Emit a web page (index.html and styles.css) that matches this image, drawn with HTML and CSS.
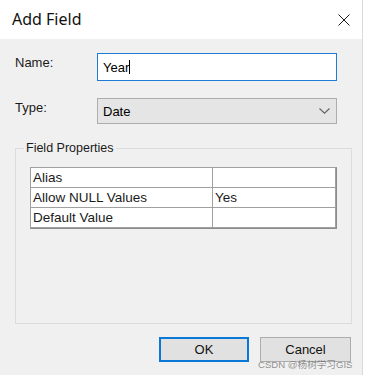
FILE: index.html
```html
<!DOCTYPE html>
<html>
<head>
<meta charset="utf-8">
<link rel="stylesheet" href="styles.css">
</head>
<body>
<div class="dialog">
  <div class="titlebar">
    <span class="title">Add Field</span>
    <svg class="close" width="12" height="12" viewBox="0 0 12 12"><path d="M0.5 0.5 L11.5 11.5 M11.5 0.5 L0.5 11.5" stroke="#1a1a1a" stroke-width="1" fill="none"/></svg>
  </div>
  <div class="content">
    <div class="row row-name">
      <label class="lbl">Name:</label>
      <div class="input"><span>Year</span><span class="caret"></span></div>
    </div>
    <div class="row row-type">
      <label class="lbl">Type:</label>
      <div class="combo"><span>Date</span>
        <svg class="chev" width="11" height="6" viewBox="0 0 11 6"><path d="M0.5 0.5 L5.5 5.2 L10.5 0.5" stroke="#606060" stroke-width="1.1" fill="none"/></svg>
      </div>
    </div>
    <fieldset class="group">
      <legend>Field Properties</legend>
      <table class="props">
        <tr><td class="c1">Alias</td><td class="c2"></td></tr>
        <tr><td class="c1">Allow NULL Values</td><td class="c2">Yes</td></tr>
        <tr><td class="c1">Default Value</td><td class="c2"></td></tr>
      </table>
    </fieldset>
    <div class="buttons">
      <button class="btn btn-ok">OK</button>
      <button class="btn">Cancel</button>
    </div>
  </div>
  <div class="watermark">CSDN @杨树学习GIS</div>
</div>
</body>
</html>
```
FILE: styles.css
```css
html, body {
  margin: 0;
  padding: 0;
  background: #ffffff;
}
.dialog {
  position: relative;
  width: 363px;
  height: 375px;
  background: #f0f0f0;
  display: flex;
  flex-direction: column;
  font-family: "Liberation Sans", Arial, sans-serif;
  font-size: 13px;
  color: #000;
  border-right: 1px solid #dadada;
  box-sizing: border-box;
}
.titlebar {
  height: 39px;
  flex: none;
  background: #ffffff;
  display: flex;
  align-items: center;
  justify-content: space-between;
  padding: 0 12px 1px 12px;
  box-sizing: border-box;
}
.title {
  font-family: "Noto Sans", sans-serif;
  font-size: 16px;
  color: #111;
}
.close {
  display: block;
  margin-top: 1px;
}
.content {
  flex: 1;
  display: flex;
  flex-direction: column;
  padding: 14px 10px 13px 15px;
}
.row {
  display: flex;
  padding-right: 15px;
}
.lbl {
  width: 82px;
  flex: none;
  padding-top: 2px;
  line-height: 15px;
  font-size: 13px;
  color: #1a1a1a;
}
.input {
  flex: 1;
  height: 28px;
  box-sizing: border-box;
  border: 1px solid #1e7bd6;
  background: #fff;
  display: flex;
  align-items: center;
  padding-left: 5px;
  font-size: 13px;
}
.caret {
  display: inline-block;
  width: 1px;
  height: 14px;
  background: #000;
}
.row-type {
  margin-top: 17px;
}
.combo {
  flex: 1;
  height: 26px;
  box-sizing: border-box;
  border: 1px solid #adadad;
  background: #e5e5e5;
  display: flex;
  align-items: center;
  justify-content: space-between;
  padding: 0 6px 0 5px;
  font-size: 13px;
}
.chev {
  display: block;
}
.group {
  flex: 1;
  margin: 17px 0 0 0;
  border: 1px solid #dcdcdc;
  padding: 11px 14px 0 14px;
  min-width: 0;
}
.group legend {
  font-size: 12.5px;
  line-height: 15px;
  padding: 0 2px;
  margin-left: -6px;
  color: #1a1a1a;
}
.props {
  width: 307px;
  border-collapse: separate;
  border-spacing: 0;
  border-top: 1px solid #a0a0a0;
  border-left: 1px solid #a0a0a0;
  border-right: 1px solid #8c8c8c;
  border-bottom: 1px solid #8c8c8c;
  background: #fff;
  font-size: 13.5px;
}
.props td {
  height: 19px;
  padding: 0 0 0 2px;
  border-right: 1px solid #a0a0a0;
  border-bottom: 1px solid #a0a0a0;
  line-height: 18px;
  white-space: nowrap;
  color: #1a1a1a;
}
.props .c1 {
  width: 179px;
}
.buttons {
  display: flex;
  justify-content: flex-end;
  gap: 11px;
  margin-top: 13px;
  padding-right: 1px;
}
.btn {
  width: 91px;
  height: 25px;
  box-sizing: border-box;
  border: 1px solid #adadad;
  background: #e1e1e1;
  font-family: "Liberation Sans", Arial, sans-serif;
  font-size: 13px;
  color: #111;
  padding: 0;
  margin: 0;
}
.btn-ok {
  width: 90px;
  border: 2px solid #0a78d7;
}
.watermark {
  position: absolute;
  left: 258px;
  top: 357px;
  font-family: "Liberation Sans", "Noto Sans CJK SC", sans-serif;
  font-size: 9.6px;
  color: rgba(110, 110, 110, 0.75);
  white-space: nowrap;
}
```
